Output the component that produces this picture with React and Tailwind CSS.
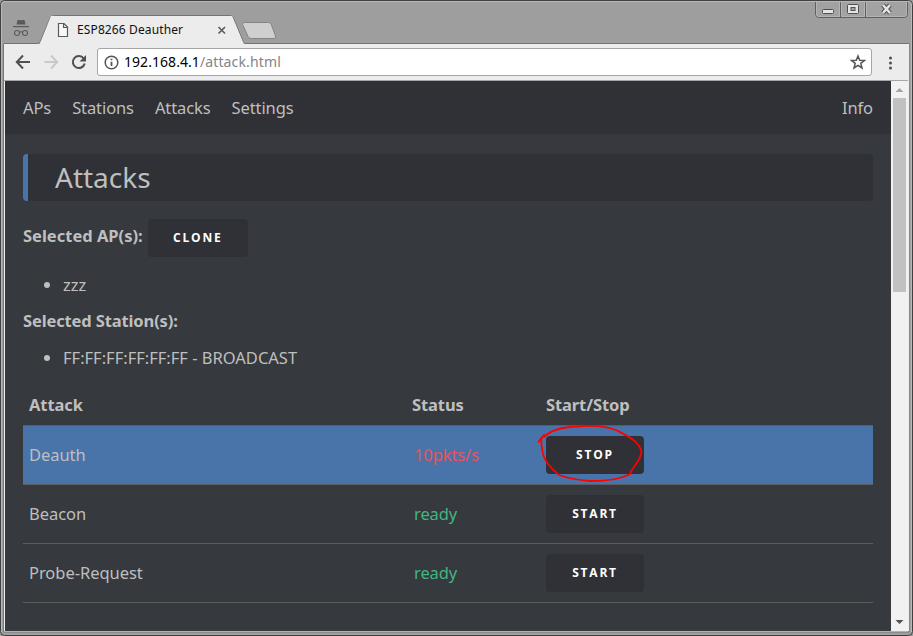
const rows = [
  { name: 'Deauth', status: '10pkts/s', action: 'STOP', active: true },
  { name: 'Beacon', status: 'ready', action: 'START', active: false },
  { name: 'Probe-Request', status: 'ready', action: 'START', active: false },
];

function Button({ children, className = '' }) {
  return (
    <button className={`flex h-[38px] items-center justify-center rounded-[4px] bg-[#2f3136] font-['Open_Sans',sans-serif] text-[12px] font-bold tracking-[1.8px] text-white ${className}`}>
      {children}
    </button>
  );
}

function TabStrip() {
  return (
    <div className="relative h-[44px] shrink-0">
      <svg className="absolute inset-0" width="913" height="44" viewBox="0 0 913 44" fill="none">
        <path d="M4 43.5H37.5Q39.5 43.5 40.3 41.5L50.3 17.5Q51.2 15.5 53.5 15.5H230Q232.300 15.500 233.200 17.500L243.200 41.500Q244 43.500 246 43.500H909V44H4Z" fill="#ececec" stroke="#737373" />
        <path d="M40 44 51 16H232L243.500 44Z" fill="#ececec" />
        <path d="M244 22.500H268.500Q270.500 22.500 271.200 24.300L275.500 36Q276.200 38.500 274 38.500H251.500Q249 38.500 248.100 36.500L242.600 24.500Q242 22.500 244 22.500Z" fill="#cfcfcf" stroke="#858585" />
        <g fill="#595959">
          <path d="M17.500 20h2.500l1 .6 1-.6h2.500l1 4.500h-9Z" />
          <path d="M13 26h16v1.200H13Z" />
        </g>
        <g stroke="#5c5c5c" strokeWidth="1.100">
          <circle cx="17" cy="33" r="2.500" />
          <circle cx="25" cy="33" r="2.500" />
          <path d="M19.500 32.300q1.500-1 3 0" />
        </g>
        <path d="M58.500 23.500h5.500l3.500 3.500v9.500h-9ZM63.500 23.500v4H67.500" fill="#f8f8f8" stroke="#5a5a5a" strokeWidth="1.200" />
        <path d="m218.500 27 6.500 6.500M225 27l-6.500 6.500" stroke="#5a5a5a" strokeWidth="1.600" />
        <path d="M815.500 2v12q0 3.500 3.500 3.500h85q3.500 0 3.500-3.500V2M840.500 2v15M865.500 2v15" fill="#a2a2a2" stroke="#606060" />
        <path d="M816.500 2v12q0 2.500 2.500 2.500h20.500V2M841.500 2v14.500h23V2M866.500 2v14.500H904q2.500 0 2.500-2.500V2" stroke="#b4b4b4" />
        <rect x="822.500" y="9.500" width="11" height="4" rx="1" fill="#e4e4e4" stroke="#505050" />
        <rect x="847.500" y="4.500" width="11" height="9" rx="1" fill="#e4e4e4" stroke="#505050" />
        <rect x="851" y="7.500" width="4" height="3" fill="#a5a5a5" stroke="#505050" />
        <path d="m883 5 7 8M890 5l-7 8" stroke="#505050" strokeWidth="4.500" />
        <path d="m883 5 7 8M890 5l-7 8" stroke="#e4e4e4" strokeWidth="2.500" />
      </svg>
      <span className="absolute left-[77px] top-[21px] whitespace-nowrap font-['Noto_Sans',sans-serif] text-[12px] leading-[18px] tracking-[0.12px] text-[#111]">ESP8266 Deauther</span>
    </div>
  );
}

function Toolbar() {
  return (
    <div className="mx-[4px] flex h-[37px] shrink-0 items-center border-b border-[#a6a6a6] bg-[#ececec]">
      <svg width="93" height="36" viewBox="4 44 93 36" fill="none" strokeWidth="2">
        <path d="M30 62H17.500M23 55.500 16.800 62l6.200 6.500" stroke="#505050" />
        <path d="M44.500 62H57M51 55.500l6.200 6.500-6.200 6.500" stroke="#c9c9c9" />
        <path d="M83.700 58.500A6 6 0 1 0 84.700 63.500" stroke="#505050" />
        <path d="M86 55v6.500h-6.500Z" fill="#505050" />
      </svg>
      <div className="flex h-[28px] w-[775px] items-center rounded-[3px] border border-[#a6a6a6] bg-white pl-[6px] pr-[5px] font-['Noto_Sans',sans-serif] text-[14px] leading-[20px] tracking-[0.05px]">
        <svg width="15" height="15" viewBox="0 0 15 15" fill="none" stroke="#555" strokeWidth="1.500">
          <circle cx="7.500" cy="7.500" r="6.300" />
          <path d="M7.500 6.700v4.300M7.500 3.700v1.600" strokeWidth="1.800" />
        </svg>
        <span className="ml-[5px] pb-px text-black">192.168.4.1</span>
        <span className="flex-1 pb-px tracking-[0.14px] text-[#858585]">/attack.html</span>
        <svg width="16" height="16" viewBox="0 0 16 16" fill="none" stroke="#555" strokeWidth="1.500">
          <path d="m8 2 1.700 4.300 4.700.2-3.600 2.900 1.200 4.600L8 11.400 4 14l1.200-4.600L1.600 6.500l4.700-.2Z" />
        </svg>
      </div>
      <svg className="ml-[16px] mt-px" width="5" height="16" viewBox="0 0 5 16" fill="#505050">
        <circle cx="2.500" cy="3" r="1.500" />
        <circle cx="2.500" cy="8" r="1.500" />
        <circle cx="2.500" cy="13" r="1.500" />
      </svg>
    </div>
  );
}

function Scrollbar() {
  return (
    <div className="flex w-[17px] shrink-0 flex-col items-center bg-[#f1f1f1]">
      <svg className="shrink-0" width="17" height="17" viewBox="0 0 17 17"><path d="M4.500 11 8.500 7l4 4Z" fill="#a3a3a3" /></svg>
      <div className="h-[194px] w-[13px] bg-[#c1c1c1]" />
      <svg className="mt-auto shrink-0" width="17" height="17" viewBox="0 0 17 17"><path d="M4.500 6h8l-4 4Z" fill="#505050" /></svg>
    </div>
  );
}

export default function App() {
  return (
    <div className="relative flex h-[636px] w-[913px] flex-col overflow-hidden bg-[#9e9e9e]">
      <TabStrip />
      <Toolbar />
      <div className="mb-[4px] ml-[4px] mr-[5px] flex min-h-0 flex-1 border-b border-l border-[#eee] bg-[#36393e] font-['Noto_Sans',sans-serif] text-[16.500px] text-[#bfbfbf]">
        <main className="flex min-w-0 flex-1 flex-col">
          <nav className="flex h-[53px] shrink-0 items-center gap-[21px] bg-[#2f3136] px-[18px] pt-[2px] tracking-[-0.1px]">
            <a>APs</a>
            <a>Stations</a>
            <a>Attacks</a>
            <a>Settings</a>
            <a className="ml-auto">Info</a>
          </nav>
          <div className="flex flex-col px-[18px] pt-[20px]">
            <h1 className="flex h-[47px] items-center rounded-[4px] border-l-[5px] border-[#4974a9] bg-[#2f3136] pb-[2px] pl-[27px] text-[28px]">Attacks</h1>
            <div className="mt-[18px] flex h-[38px] gap-[5px]">
              <strong className="leading-[34px]">Selected AP(s):</strong>
              <Button className="w-[100px]">CLONE</Button>
            </div>
            <ul className="mt-[14px] list-disc pl-[40px] leading-[27px]"><li>zzz</li></ul>
            <strong className="mt-[9px] leading-[27px] tracking-[-0.13px]">Selected Station(s):</strong>
            <ul className="mt-[10px] list-disc pl-[40px] leading-[27px]"><li>FF:FF:FF:FF:FF:FF - BROADCAST</li></ul>
            <div className="mt-[14px] grid h-[41px] grid-cols-[383px_134px_1fr] border-b border-[#5c5d5f] font-bold leading-[40px] tracking-[-0.1px]">
              <span className="pl-[6px]">Attack</span>
              <span className="pl-[6px]">Status</span>
              <span className="pl-[6px]">Start/Stop</span>
            </div>
            {rows.map((row) => (
              <div key={row.name} className={`grid h-[59px] grid-cols-[383px_134px_1fr] items-center border-b border-[#5c5d5f] ${row.active ? 'bg-[#4974a9]' : ''}`}>
                <span className="pl-[6px] tracking-[-0.05px]">{row.name}</span>
                <span className={`pl-[8px] tracking-[-0.1px] ${row.active ? 'text-[#f04f5c]' : 'text-[#43b581]'}`}>{row.status}</span>
                <div className="pl-[6px]"><Button className="w-[98px]">{row.action}</Button></div>
              </div>
            ))}
          </div>
        </main>
        <Scrollbar />
      </div>
      <svg className="pointer-events-none absolute inset-0" width="913" height="636" viewBox="0 0 913 636" fill="none">
        <path d="M544 437C550 431 561 427 577 426.500C594 425 609 427 617 430.500C626 435 641 442 641.500 453C640 461 632 468 630 474C621 479 605 481 590 481C578 480 567 478 559 475C551 469 543 459 542.500 451C541 444 541 440 542 437L538.500 442L544 435" stroke="#f00" strokeWidth="1.800" strokeLinecap="round" strokeLinejoin="round" />
        <rect x="0.500" y="0.500" width="912" height="635" rx="4" stroke="#404040" />
        <path d="M1.500 632V5q0-3.500 3.500-3.500h903q3.500 0 3.500 3.500v627" stroke="#b8b8b8" />
        <path d="M3.500 44v588h905.500V44" stroke="#777" />
        <path d="M908.500 44v587" stroke="#eee" />
      </svg>
    </div>
  );
}
